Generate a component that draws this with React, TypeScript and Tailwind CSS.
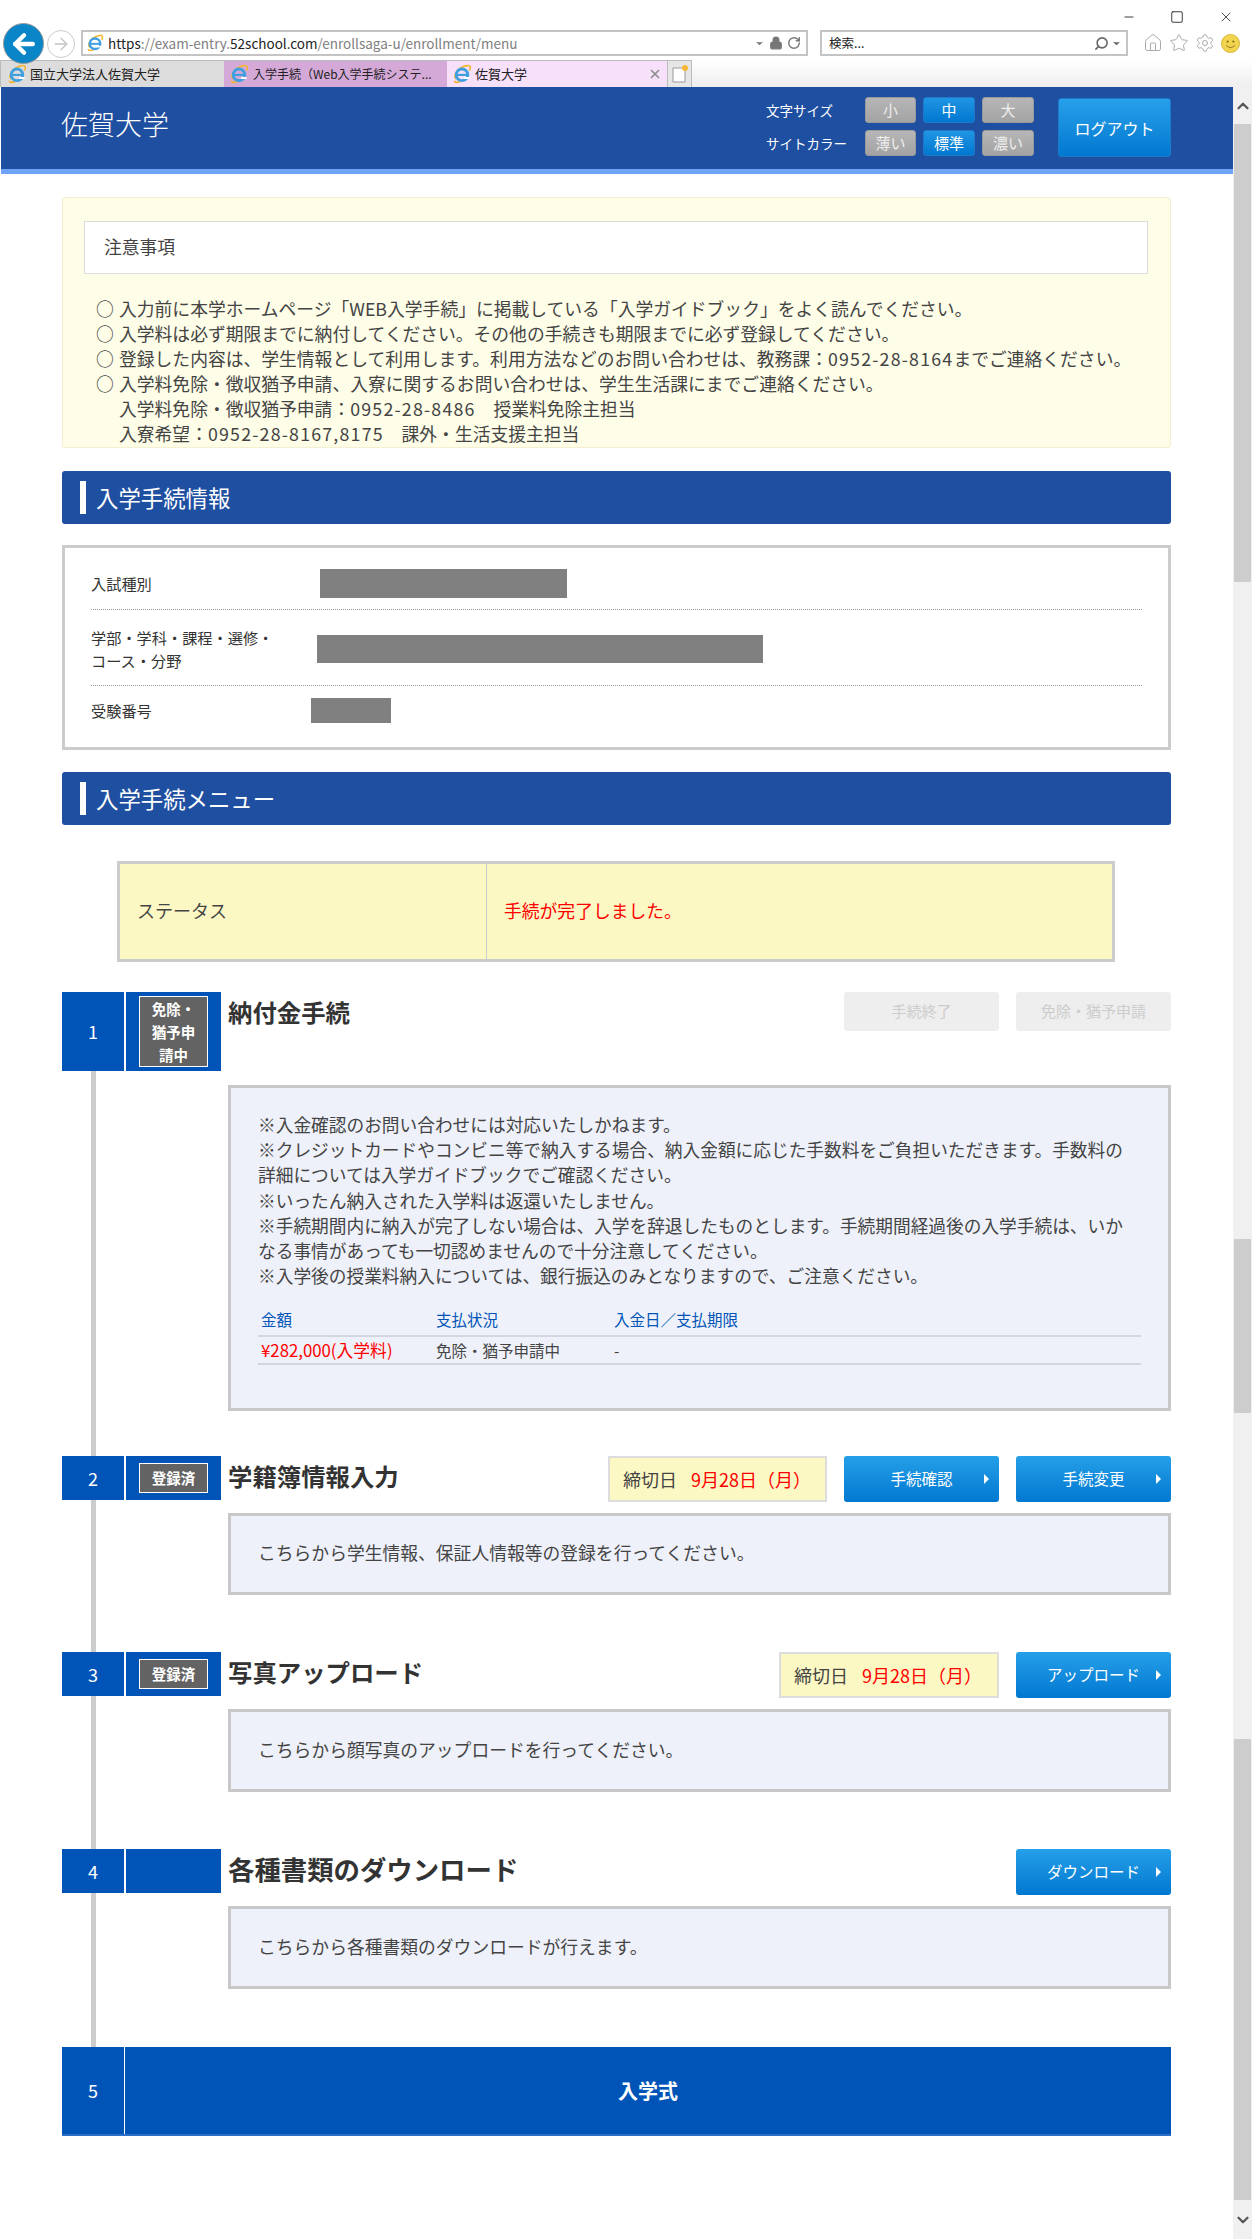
import type { ReactNode } from "react";
import { ArrowLeft, ArrowRight, ChevronDown, ChevronUp, Home, Lock, Minus, RotateCw, Search, Settings, Square, Star, X } from "lucide-react";

function IeIcon({ size = 20 }: { size?: number }) {
  return (
    <svg width={size} height={size} viewBox="0 0 24 24" className="shrink-0">
      <path d="M5 18 C1 13 7 4 18 2 C22 1 23 4 21 8" fill="none" stroke="#f2b632" strokeWidth="2" />
      <path d="M3 20 C3 23 7 22 10 21" fill="none" stroke="#f2b632" strokeWidth="2" />
      <circle cx="12" cy="13" r="7" fill="none" stroke="#3f9fe0" strokeWidth="3.4" />
      <rect x="6" y="11.8" width="12" height="2.6" fill="#3f9fe0" />
      <path d="M15 15.5 L21 15.5 L21 18 L14 18 Z" fill="#fff" />
    </svg>
  );
}

function BrowserChrome() {
  return (
    <div className="h-[87px] bg-white text-[#222]">
      <div className="flex h-[30px] items-center justify-end gap-[34px] pr-[18px] pt-[4px]">
        <Minus size={14} strokeWidth={1.5} />
        <Square size={14} strokeWidth={1.5} />
        <X size={16} strokeWidth={1.2} />
      </div>
      <div className="flex h-[30px] items-start">
        <div className="relative z-10 mt-[-7px] ml-[3px] flex h-[41px] w-[41px] items-center justify-center rounded-full border border-[#999] bg-[#0a86c8]">
          <ArrowLeft size={30} strokeWidth={3.5} color="#fff" />
        </div>
        <div className="mt-[0px] ml-[3px] flex h-[28px] w-[28px] items-center justify-center rounded-full border border-[#ccc]">
          <ArrowRight size={20} strokeWidth={1.6} color="#c4c4c4" />
        </div>
        <div className="ml-[6px] flex h-[26px] w-[727px] items-center border-2 border-[#c4c4c4] pl-[3px]">
          <IeIcon size={18} />
          <span className="ml-[4px] text-[13.5px] text-[#808080]">
            <span className="text-[#222]">https</span>://exam-entry.<span className="text-[#222]">52school.com</span>/enrollsaga-u/enrollment/menu
          </span>
          <div className="ml-auto flex items-center gap-[4px] pr-[5px] text-[#777]">
            <ChevronDown size={11} fill="#777" />
            <Lock size={14} fill="#777" />
            <RotateCw size={14} strokeWidth={2.5} />
          </div>
        </div>
        <div className="ml-[12px] flex h-[26px] w-[308px] items-center border-2 border-[#c4c4c4] pl-[7px] text-[12.5px]">
          検索...
          <div className="ml-auto flex items-center gap-[2px] pr-[4px] text-[#666]">
            <Search size={15} strokeWidth={2.5} className="-scale-x-100" />
            <ChevronDown size={11} fill="#666" />
          </div>
        </div>
        <div className="ml-[15px] flex items-center gap-[6px] pt-[3px] text-[#aaa]">
          <Home size={20} strokeWidth={1.2} />
          <Star size={20} strokeWidth={1.2} />
          <Settings size={20} strokeWidth={1.2} />
          <svg width="19" height="19" viewBox="0 0 20 20">
            <circle cx="10" cy="10" r="9.5" fill="#f3d44e" stroke="#d5b53a" />
            <circle cx="7" cy="8" r="1.2" fill="#8a7420" />
            <circle cx="13" cy="8" r="1.2" fill="#8a7420" />
            <path d="M5.5 12 Q10 16.5 14.5 12" fill="none" stroke="#8a7420" />
          </svg>
        </div>
      </div>
      <div className="flex h-[27px] bg-gradient-to-b from-white to-[#eeeeee] text-[13px]">
        <div className="flex w-[224px] items-center gap-[3px] border-t border-l border-[#bbb] bg-[#dcdcdc] pl-[6px]">
          <IeIcon /> 国立大学法人佐賀大学
        </div>
        <div className="flex w-[223px] items-center gap-[4px] border-t border-[#bbb] bg-[#d4a9d8] pl-[5px]">
          <IeIcon /> <span className="text-[12px] whitespace-nowrap">入学手続（Web入学手続システ...</span>
        </div>
        <div className="flex w-[220px] items-center gap-[3px] border-t border-[#bbb] bg-[#f6e0fa] pl-[5px]">
          <IeIcon /> 佐賀大学
          <X size={14} strokeWidth={3} color="#8f8f8f" className="ml-auto mr-[5px]" />
        </div>
        <div className="flex w-[25px] items-center justify-center border-x border-t border-[#bbb] bg-[#e6e6e6]">
          <svg width="18" height="20" viewBox="0 0 18 20">
            <path d="M2 4 H11 L14 7 V18 H2 Z" fill="#fff" stroke="#999" />
            <circle cx="14" cy="4" r="3" fill="#f7b733" />
          </svg>
        </div>
      </div>
    </div>
  );
}

function SmallButton({ label, active }: { label: string; active?: boolean }) {
  return (
    <div
      className={
        active
          ? "flex h-[26px] items-center justify-center rounded-[3px] border border-[#1f78c8] bg-gradient-to-b from-[#1f95e4] to-[#0078d0] text-[15px] text-white"
          : "flex h-[26px] items-center justify-center rounded-[3px] border border-[#999] bg-gradient-to-b from-[#b6b6b6] to-[#a3a3a3] text-[15px] text-[#eee]"
      }
    >
      {label}
    </div>
  );
}

function SiteHeader() {
  return (
    <header className="ml-px border-b-[5px] border-[#6fa3f7] bg-[#1f4fa0]">
      <div className="flex h-[82px] items-start text-white">
        <div className="ml-[60px] mt-[17px] text-[27px] leading-[40px] font-light">佐賀大学</div>
        <div className="ml-auto mt-[10px] grid grid-cols-[92px_51px_52px_52px] items-center gap-x-[7px] gap-y-[7px] text-[13.5px]">
          <span>文字サイズ</span>
          <SmallButton label="小" />
          <SmallButton label="中" active />
          <SmallButton label="大" />
          <span>サイトカラー</span>
          <SmallButton label="薄い" />
          <SmallButton label="標準" active />
          <SmallButton label="濃い" />
        </div>
        <div className="ml-[24px] mr-[62px] mt-[11px] flex h-[59px] w-[113px] items-center justify-center rounded-[3px] border border-[#1f78c8] bg-gradient-to-b from-[#27a0ea] to-[#0078d0] text-[16px]">
          ログアウト
        </div>
      </div>
    </header>
  );
}

function SectionBar({ title }: { title: string }) {
  return (
    <div className="flex h-[53px] items-center rounded-[3px] bg-[#1f4fa0] pl-[18px] text-[22.4px] text-white">
      <div className="mr-[10px] h-[33px] w-[6px] bg-white" />
      {title}
    </div>
  );
}

function Digits({ children }: { children: ReactNode }) {
  return <span className="tracking-[1.2px]">{children}</span>;
}

function NoticeItem({ children }: { children: ReactNode }) {
  return (
    <div className="flex">
      <span className="w-[23px] shrink-0">○</span>
      <span>{children}</span>
    </div>
  );
}

function Notice() {
  return (
    <div className="mt-[23px] h-[251px] rounded-[3px] border border-[#f4efd0] bg-[#fefde8] pl-[21px] pr-[22px] pt-[23px] text-[#444]">
      <div className="flex h-[53px] items-center border border-[#dcdcdc] bg-white pb-[2px] pl-[19px] text-[17.8px]">注意事項</div>
      <div className="mt-[22px] pl-[12px] text-[17.8px] leading-[25px] whitespace-nowrap">
        <NoticeItem>入力前に本学ホームページ「WEB入学手続」に掲載している「入学ガイドブック」をよく読んでください。</NoticeItem>
        <NoticeItem>入学料は必ず期限までに納付してください。その他の手続きも期限までに必ず登録してください。</NoticeItem>
        <NoticeItem>登録した内容は、学生情報として利用します。利用方法などのお問い合わせは、教務課：<Digits>0952-28-8164</Digits>までご連絡ください。</NoticeItem>
        <NoticeItem>入学料免除・徴収猶予申請、入寮に関するお問い合わせは、学生生活課にまでご連絡ください。</NoticeItem>
        <div className="pl-[23px]">入学料免除・徴収猶予申請：<Digits>0952-28-8486</Digits>　授業料免除主担当</div>
        <div className="pl-[23px]">入寮希望：<Digits>0952-28-8167,8175</Digits>　課外・生活支援主担当</div>
      </div>
    </div>
  );
}

function InfoRow({ label, children, className }: { label: ReactNode; children: ReactNode; className: string }) {
  return (
    <div className={`flex items-center ${className}`}>
      <div className="w-[200px] text-[15.2px] leading-[23px] text-[#333]">{label}</div>
      {children}
    </div>
  );
}

function EntranceInfo() {
  return (
    <div className="mt-[21px] flex h-[205px] flex-col border-[3px] border-[#cccccc] px-[26px]">
      <InfoRow label="入試種別" className="h-[62px] border-b border-dotted border-[#999] pt-[10px]">
        <div className="ml-[29px] h-[29px] w-[247px] bg-[#808080]" />
      </InfoRow>
      <InfoRow label={<>学部・学科・課程・選修・<br />コース・分野</>} className="h-[76px] border-b border-dotted border-[#999] pt-[2px]">
        <div className="ml-[26px] h-[28px] w-[446px] bg-[#808080]" />
      </InfoRow>
      <InfoRow label="受験番号" className="h-[61px] pb-[13px]">
        <div className="ml-[20px] h-[25px] w-[80px] bg-[#808080]" />
      </InfoRow>
    </div>
  );
}

function Status() {
  return (
    <div className="ml-[55px] mr-[56px] mt-[36px] flex h-[101px] items-stretch border-[3px] border-[#cccccc] bg-[#fcf8c3]">
      <div className="flex w-[367px] items-center border-r border-[#cccccc] pb-[2px] pl-[17px] text-[18px] text-[#444]">ステータス</div>
      <div className="flex items-center pb-[2px] pl-[17px] text-[17.8px] text-[#ff0000]">手続が完了しました。</div>
    </div>
  );
}

function BlueButton({ label }: { label: string }) {
  return (
    <div className="relative flex h-[46px] w-[155px] items-center justify-center rounded-[3px] bg-gradient-to-b from-[#249fe8] to-[#0078d0] text-[15.5px] text-white">
      {label}
      <div className="absolute right-[10px] top-[18px] h-0 w-0 border-y-[5px] border-l-[5px] border-y-transparent border-l-white" />
    </div>
  );
}

function GrayButton({ label }: { label: string }) {
  return <div className="flex h-[39px] w-[155px] items-center justify-center rounded-[3px] bg-[#eeeeee] text-[15px] text-[#cccccc]">{label}</div>;
}

function Deadline({ width }: { width: string }) {
  return (
    <div className={`flex h-[46px] ${width} items-center border-2 border-[#dddddd] bg-[#fcf8c3] pl-[13px] text-[18px] text-[#444]`}>
      締切日<span className="ml-[14px] text-[#ff0000]">9月28日（月）</span>
    </div>
  );
}

function Badge({ children, tall }: { children: ReactNode; tall?: boolean }) {
  return (
    <div
      className={
        tall
          ? "mx-auto mt-[4px] flex h-[71px] w-[69px] items-center justify-center border border-white bg-[#636363] text-center text-[14.5px] leading-[23px] font-bold text-white"
          : "mx-auto mt-[7px] flex h-[30px] w-[69px] items-center justify-center border border-white bg-[#636363] text-[14.5px] font-bold text-white"
      }
    >
      {children}
    </div>
  );
}

type StepProps = {
  num: number;
  title: string;
  titleClass?: string;
  badge?: ReactNode;
  controls?: ReactNode;
  headerClass: string;
  bodyClass: string;
  children: ReactNode;
};

function Step({ num, title, titleClass = "text-[24.4px]", badge, controls, headerClass, bodyClass, children }: StepProps) {
  return (
    <section>
      <div className={`flex items-start ${headerClass}`}>
        <div className="flex h-full w-[62px] shrink-0 items-center justify-center bg-[#0054b8] text-[18px] text-white">{num}</div>
        <div className="ml-[2px] h-full w-[95px] shrink-0 bg-[#0054b8]">{badge}</div>
        <h2 className={`ml-[7px] leading-[40px] font-bold text-[#333] ${titleClass}`}>{title}</h2>
        <div className="ml-auto flex gap-[17px]">{controls}</div>
      </div>
      <div className="flex">
        <div className="ml-[29px] w-[5px] shrink-0 bg-[#cccccc]" />
        <div className={`ml-[132px] flex-1 ${bodyClass}`}>{children}</div>
      </div>
    </section>
  );
}

function Panel({ height, children }: { height: string; children: ReactNode }) {
  return (
    <div className={`${height} border-[3px] border-[#c8c8c8] bg-[#eef1fa] px-[27px] text-[#444]`}>{children}</div>
  );
}

function SimplePanel({ text, height = "h-[83px]" }: { text: string; height?: string }) {
  return (
    <Panel height={height}>
      <div className="flex h-full items-center pb-[3px] text-[17.8px]">{text}</div>
    </Panel>
  );
}

function PaymentPanel() {
  return (
    <Panel height="h-[326px]">
      <div className="pt-[24px] text-[17.7px] leading-[25.2px] whitespace-nowrap">
        ※入金確認のお問い合わせには対応いたしかねます。
        <br />
        ※クレジットカードやコンビニ等で納入する場合、納入金額に応じた手数料をご負担いただきます。手数料の
        <br />
        詳細については入学ガイドブックでご確認ください。
        <br />
        ※いったん納入された入学料は返還いたしません。
        <br />
        ※手続期間内に納入が完了しない場合は、入学を辞退したものとします。手続期間経過後の入学手続は、いか
        <br />
        なる事情があっても一切認めませんので十分注意してください。
        <br />
        ※入学後の授業料納入については、銀行振込のみとなりますので、ご注意ください。
      </div>
      <div className="mt-[16px] text-[15.5px]">
        <div className="grid h-[33px] grid-cols-[175px_178px_1fr] items-center border-b-2 border-[#d2d6de] pl-[3px] text-[#0054b8]">
          <span>金額</span>
          <span>支払状況</span>
          <span>入金日／支払期限</span>
        </div>
        <div className="grid h-[28px] grid-cols-[175px_178px_1fr] items-center border-b-2 border-[#d2d6de] pl-[3px]">
          <span className="text-[16.8px] text-[#ff0000]">¥282,000(入学料)</span>
          <span>免除・猶予申請中</span>
          <span>-</span>
        </div>
      </div>
    </Panel>
  );
}

function Scrollbar() {
  return (
    <div className="flex h-[2152px] w-[19px] shrink-0 flex-col items-center bg-[#f0f0f0]">
      <div className="flex h-[37px] items-center">
        <ChevronUp size={18} strokeWidth={3} color="#555" />
      </div>
      <div className="h-[458px] w-[17px] bg-[#cdcdcd]" />
      <div className="mt-[657px] h-[174px] w-[17px] bg-[#cdcdcd]" />
      <div className="mt-[326px] h-[461px] w-[17px] bg-[#cdcdcd]" />
      <div className="flex h-[39px] items-center">
        <ChevronDown size={18} strokeWidth={3} color="#555" />
      </div>
    </div>
  );
}

export default function App() {
  return (
    <div className="h-[2239px] w-[1252px] overflow-hidden bg-white font-['Noto_Sans_CJK_JP',sans-serif]">
      <BrowserChrome />
      <div className="flex">
        <div className="w-[1233px]">
          <SiteHeader />
          <main className="ml-[62px] w-[1109px]">
            <Notice />
            <div className="mt-[23px]">
              <SectionBar title="入学手続情報" />
            </div>
            <EntranceInfo />
            <div className="mt-[22px]">
              <SectionBar title="入学手続メニュー" />
            </div>
            <Status />
            <div className="mt-[30px]">
              <Step
                num={1}
                title="納付金手続"
                headerClass="h-[79px]"
                bodyClass="pt-[14px] pb-[45px]"
                badge={<Badge tall>免除・<br />猶予申<br />請中</Badge>}
                controls={<><GrayButton label="手続終了" /><GrayButton label="免除・猶予申請" /></>}
              >
                <PaymentPanel />
              </Step>
              <Step
                num={2}
                title="学籍簿情報入力"
                headerClass="h-[44px]"
                bodyClass="pt-[13px] pb-[57px]"
                badge={<Badge>登録済</Badge>}
                controls={<><Deadline width="w-[219px]" /><BlueButton label="手続確認" /><BlueButton label="手続変更" /></>}
              >
                <SimplePanel height="h-[82px]" text="こちらから学生情報、保証人情報等の登録を行ってください。" />
              </Step>
              <Step
                num={3}
                title="写真アップロード"
                headerClass="h-[44px]"
                bodyClass="pt-[13px] pb-[57px]"
                badge={<Badge>登録済</Badge>}
                controls={<><Deadline width="w-[220px]" /><BlueButton label="アップロード" /></>}
              >
                <SimplePanel text="こちらから顔写真のアップロードを行ってください。" />
              </Step>
              <Step
                num={4}
                title="各種書類のダウンロード"
                titleClass="text-[26.4px]"
                headerClass="h-[44px]"
                bodyClass="pt-[13px] pb-[58px]"
                controls={<BlueButton label="ダウンロード" />}
              >
                <SimplePanel text="こちらから各種書類のダウンロードが行えます。" />
              </Step>
              <div className="flex h-[89px] border-b-2 border-[#2d6fc4] bg-[#0054b8] text-white">
                <div className="flex w-[63px] items-center justify-center border-r border-white text-[18px]">5</div>
                <div className="flex flex-1 items-center justify-center text-[20px] font-bold">入学式</div>
              </div>
            </div>
          </main>
        </div>
        <Scrollbar />
      </div>
    </div>
  );
}
